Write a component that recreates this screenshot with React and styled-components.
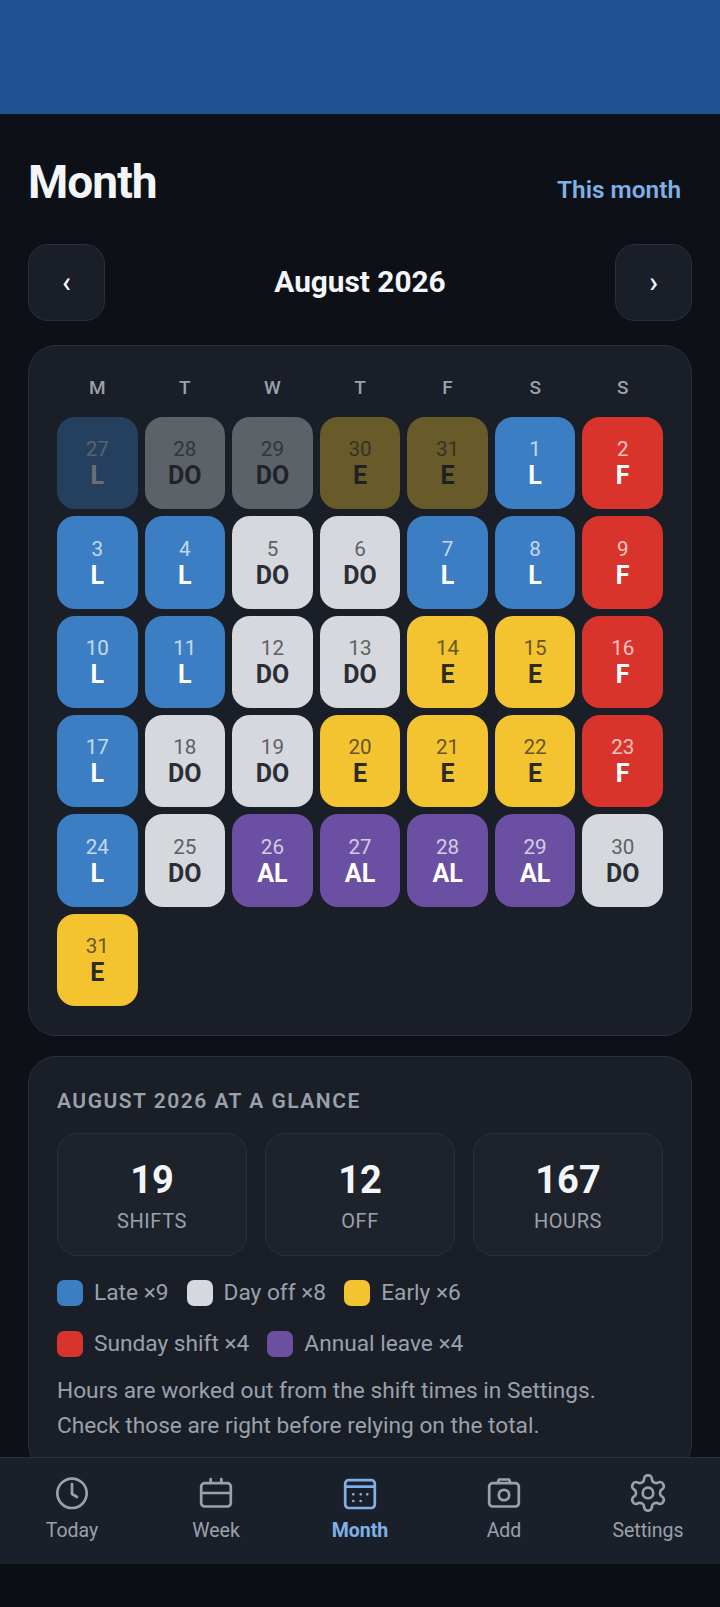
import React from "react";
import styled, { createGlobalStyle } from "styled-components";

const Global = createGlobalStyle`
  html, body { margin: 0; padding: 0; background: #0b0e13; }
  * { box-sizing: border-box; }
`;

const Shell = styled.div`
  width: 720px;
  height: 1607px;
  display: flex;
  flex-direction: column;
  overflow: hidden;
  background: #0d1117;
  color: #f3f5f8;
  font-family: Roboto, "Liberation Sans", sans-serif;
`;
const StatusBand = styled.div`
  flex: 0 0 114px;
  background: #1f5192;
`;
const Scroll = styled.main`
  flex: 1 1 0;
  min-height: 0;
  overflow: hidden;
  padding: 42px 28px 0;
  display: flex;
  flex-direction: column;
`;
const TitleRow = styled.div`
  display: flex;
  justify-content: space-between;
  align-items: flex-end;
  height: 56px;
`;
const Title = styled.h1`
  margin: 0;
  font-size: 46px;
  line-height: 52px;
  font-weight: 700;
  letter-spacing: -0.95px;
`;
const ThisMonth = styled.button`
  border: 0;
  background: none;
  font: 600 24.4px/32px Roboto, sans-serif;
  color: #7fb0e6;
  padding: 0 11px 2px 0;
`;
const MonthNav = styled.div`
  display: flex;
  justify-content: space-between;
  align-items: center;
  margin-top: 36px;
`;
const NavBtn = styled.button`
  width: 77px;
  height: 77px;
  border-radius: 20px;
  border: 1px solid #2b3038;
  background: #1a1e26;
  color: #f3f5f8;
  font: 500 29px/1 Roboto, sans-serif;
  display: flex;
  align-items: center;
  justify-content: center;
`;
const MonthLabel = styled.div`
  font-size: 29.8px;
  font-weight: 700;
  padding-bottom: 2px;
`;
const Card = styled.section`
  flex: 0 0 auto;
  background: #1a1e26;
  border: 1px solid #2b3038;
  border-radius: 28px;
  padding: 28px;
`;
const CalendarCard = styled(Card)`
  margin-top: 24px;
  padding-bottom: 29px;
`;
const WeekHead = styled.div`
  display: grid;
  grid-template-columns: repeat(7, 1fr);
  column-gap: 7px;
  height: 27px;
  margin-bottom: 16px;
`;
const Dow = styled.div`
  text-align: center;
  font-size: 19px;
  line-height: 27px;
  font-weight: 500;
  color: #9aa1ac;
`;
const Grid = styled.div`
  display: grid;
  grid-template-columns: repeat(7, 1fr);
  gap: 7px;
`;
const SHIFT = {
  L: { bg: "#3b7ec4", fg: "#ffffff" },
  DO: { bg: "#d5d8dd", fg: "#2a2e35" },
  E: { bg: "#f4c430", fg: "#2a2a20" },
  F: { bg: "#d9342b", fg: "#ffffff" },
  AL: { bg: "#6b4fa3", fg: "#ffffff" },
};
const Cell = styled.div`
  height: 92.35px;
  border-radius: 18px;
  background: ${(p) => SHIFT[p.$s].bg};
  color: ${(p) => SHIFT[p.$s].fg};
  opacity: ${(p) => (p.$dim ? 0.36 : 1)};
  display: flex;
  flex-direction: column;
  align-items: center;
  justify-content: center;
`;
const DayNum = styled.div`
  font-size: 20.6px;
  line-height: 26px;
  font-weight: 400;
  opacity: 0.7;
  margin-top: -1px;
`;
const Code = styled.div`
  font-size: 25px;
  line-height: 27px;
  font-weight: 700;
`;
const SummaryCard = styled(Card)`
  margin-top: 20px;
  padding-top: 30px;
`;
const SummaryTitle = styled.h2`
  margin: 0;
  font-size: 21px;
  line-height: 28px;
  font-weight: 600;
  letter-spacing: 1.5px;
  color: #9aa1ac;
`;
const Stats = styled.div`
  display: grid;
  grid-template-columns: repeat(3, 1fr);
  gap: 18px;
  margin-top: 18px;
`;
const Stat = styled.div`
  height: 123px;
  border: 1px solid #2b3038;
  border-radius: 20px;
  background: #1e232b;
  text-align: center;
  padding-top: 23px;
`;
const StatValue = styled.div`
  font-size: 38px;
  line-height: 46px;
  font-weight: 700;
`;
const StatLabel = styled.div`
  margin-top: 5px;
  font-size: 20px;
  line-height: 26px;
  letter-spacing: 0.6px;
  color: #9aa1ac;
`;
const Legend = styled.div`
  display: flex;
  flex-wrap: wrap;
  gap: 14px 18px;
  margin-top: 18px;
`;
const LegendItem = styled.div`
  display: flex;
  align-items: center;
  gap: 11px;
  height: 37px;
  font-size: 22.7px;
  color: #9aa1ac;
`;
const Swatch = styled.span`
  width: 26px;
  height: 26px;
  border-radius: 7px;
  background: ${(p) => p.$c};
`;
const Note = styled.p`
  margin: 11px 0 0;
  font-size: 22.7px;
  line-height: 35px;
  color: #9aa1ac;
`;
const BottomNav = styled.nav`
  flex: 0 0 107px;
  display: grid;
  grid-template-columns: repeat(5, 1fr);
  background: #1a202a;
  border-top: 1px solid #2b3038;
`;
const Tab = styled.div`
  display: flex;
  flex-direction: column;
  align-items: center;
  padding-top: 15px;
  color: ${(p) => (p.$active ? "#7fb0e6" : "#9aa1ac")};
  font-size: 19.5px;
  line-height: 28px;
  font-weight: ${(p) => (p.$active ? 700 : 400)};
`;
const IconBox = styled.svg`
  width: 38px;
  height: 38px;
  margin-bottom: 6px;
  overflow: visible;
  fill: none;
  stroke: currentColor;
  stroke-width: ${(p) => p.$sw || 2.7};
  stroke-linecap: round;
  stroke-linejoin: round;
`;
const GestureBand = styled.div`
  flex: 0 0 43px;
  background: #0b0e13;
`;

const Icon = ({ children, box = "0 0 38 38", sw }) => <IconBox viewBox={box} $sw={sw}>{children}</IconBox>;

const days = [
  [27, "L", 1], [28, "DO", 1], [29, "DO", 1], [30, "E", 1], [31, "E", 1], [1, "L"], [2, "F"],
  [3, "L"], [4, "L"], [5, "DO"], [6, "DO"], [7, "L"], [8, "L"], [9, "F"],
  [10, "L"], [11, "L"], [12, "DO"], [13, "DO"], [14, "E"], [15, "E"], [16, "F"],
  [17, "L"], [18, "DO"], [19, "DO"], [20, "E"], [21, "E"], [22, "E"], [23, "F"],
  [24, "L"], [25, "DO"], [26, "AL"], [27, "AL"], [28, "AL"], [29, "AL"], [30, "DO"],
  [31, "E"],
];
const legend = [
  ["#3b7ec4", "Late ×9"], ["#d5d8dd", "Day off ×8"], ["#f4c430", "Early ×6"],
  ["#d9342b", "Sunday shift ×4"], ["#6b4fa3", "Annual leave ×4"],
];

export default function App() {
  return (
    <Shell>
      <Global />
      <StatusBand />
      <Scroll>
        <TitleRow>
          <Title>Month</Title>
          <ThisMonth>This month</ThisMonth>
        </TitleRow>
        <MonthNav>
          <NavBtn>‹</NavBtn>
          <MonthLabel>August 2026</MonthLabel>
          <NavBtn>›</NavBtn>
        </MonthNav>
        <CalendarCard>
          <WeekHead>
            {["M", "T", "W", "T", "F", "S", "S"].map((d, i) => <Dow key={i}>{d}</Dow>)}
          </WeekHead>
          <Grid>
            {days.map(([n, s, dim], i) => (
              <Cell key={i} $s={s} $dim={dim}>
                <DayNum>{n}</DayNum>
                <Code>{s}</Code>
              </Cell>
            ))}
          </Grid>
        </CalendarCard>
        <SummaryCard>
          <SummaryTitle>AUGUST 2026 AT A GLANCE</SummaryTitle>
          <Stats>
            <Stat><StatValue>19</StatValue><StatLabel>SHIFTS</StatLabel></Stat>
            <Stat><StatValue>12</StatValue><StatLabel>OFF</StatLabel></Stat>
            <Stat><StatValue>167</StatValue><StatLabel>HOURS</StatLabel></Stat>
          </Stats>
          <Legend>
            {legend.map(([c, t]) => (
              <LegendItem key={t}><Swatch $c={c} />{t}</LegendItem>
            ))}
          </Legend>
          <Note>Hours are worked out from the shift times in Settings.<br />Check those are right before relying on the total.</Note>
        </SummaryCard>
      </Scroll>
      <BottomNav>
        <Tab>
          <Icon><circle cx="19" cy="20.3" r="14.7" /><path d="M19 11v10l5 3" /></Icon>
          Today
        </Tab>
        <Tab>
          <Icon><rect x="4.2" y="10.2" width="29.6" height="23.3" rx="3.5" /><path d="M4.2 20h29.6M13.7 6v4M24.3 6v4" /></Icon>
          Week
        </Tab>
        <Tab $active>
          <Icon>
            <rect x="4.2" y="7.2" width="29.6" height="27.8" rx="3.5" />
            <path d="M4.2 13.7h29.6M12.3 21.3h.01M19.7 21.3h.01M26.3 21.3h.01M12.3 28h.01M19.7 28h.01" />
          </Icon>
          Month
        </Tab>
        <Tab>
          <Icon>
            <rect x="4.2" y="10.2" width="29.6" height="23.3" rx="3.5" />
            <path d="M12.5 10l1.5-3.5h10l1.5 3.5" />
            <circle cx="19" cy="22" r="5.2" />
          </Icon>
          Add
        </Tab>
        <Tab>
          <Icon box="1.2 0.65 21.6 21.6" sw={1.5}>
            <path d="M12.22 2h-.44a2 2 0 0 0-2 2v.18a2 2 0 0 1-1 1.73l-.43.25a2 2 0 0 1-2 0l-.15-.08a2 2 0 0 0-2.73.73l-.22.38a2 2 0 0 0 .73 2.73l.15.1a2 2 0 0 1 1 1.72v.51a2 2 0 0 1-1 1.74l-.15.09a2 2 0 0 0-.73 2.73l.22.38a2 2 0 0 0 2.73.73l.15-.08a2 2 0 0 1 2 0l.43.25a2 2 0 0 1 1 1.73V20a2 2 0 0 0 2 2h.44a2 2 0 0 0 2-2v-.18a2 2 0 0 1 1-1.73l.43-.25a2 2 0 0 1 2 0l.15.08a2 2 0 0 0 2.73-.73l.22-.39a2 2 0 0 0-.73-2.73l-.15-.08a2 2 0 0 1-1-1.74v-.5a2 2 0 0 1 1-1.74l.15-.09a2 2 0 0 0 .73-2.73l-.22-.38a2 2 0 0 0-2.73-.73l-.15.08a2 2 0 0 1-2 0l-.43-.25a2 2 0 0 1-1-1.73V4a2 2 0 0 0-2-2z" />
            <circle cx="12" cy="12" r="3" />
          </Icon>
          Settings
        </Tab>
      </BottomNav>
      <GestureBand />
    </Shell>
  );
}
